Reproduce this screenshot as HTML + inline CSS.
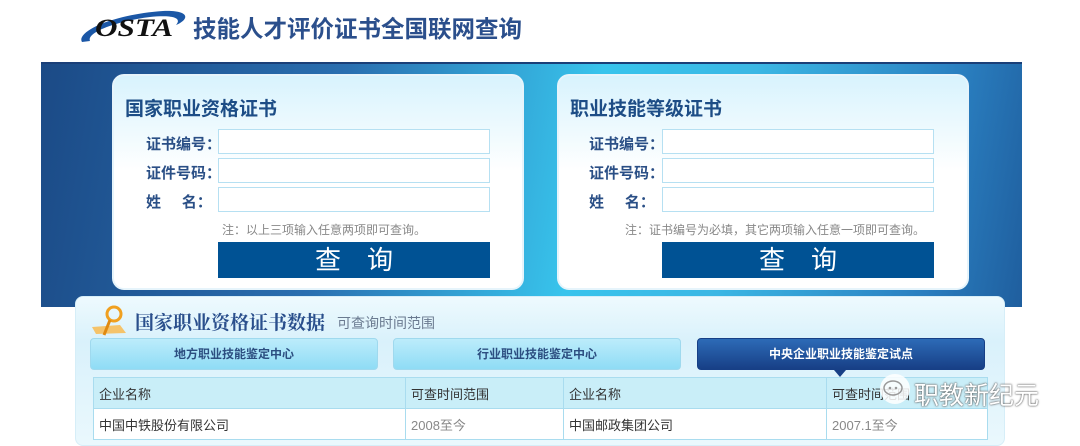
<!DOCTYPE html>
<html><head><meta charset="utf-8"><style>
*{margin:0;padding:0;box-sizing:border-box}
body{width:1080px;height:438px;overflow:hidden;background:#fff;font-family:"Liberation Sans","Noto Sans CJK SC",sans-serif;position:relative}
.abs{position:absolute}
.band{left:41px;top:62px;width:981px;height:245px;background:linear-gradient(100deg,#1b4a86 0%,#2a6fb0 30%,#38c4ec 55%,#3bb7e4 70%,#2a7fc0 90%,#1f5e9e 100%);border-top:2px solid #1a3f78}
.card{width:412px;height:216px;top:74px;border-radius:12px;background:linear-gradient(#d8f3fd 0%,#ffffff 45%,#fff 100%);border:2px solid #e6f4fb}
.card h2{position:absolute;left:11px;top:18px;font-size:19px;color:#1d4d86;font-weight:bold}
.lbl{position:absolute;font-size:15px;font-weight:bold;color:#2a4f86;width:75px}
.inp{position:absolute;width:272px;height:25px;background:#fff;border:1px solid #b6e0f2}
.note{position:absolute;font-size:12px;color:#888}
.btn{position:absolute;width:272px;height:36px;background:#005294;color:#fff;font-size:26px;text-align:center;line-height:36px;letter-spacing:26px;padding-left:26px}
.panel{left:75px;top:296px;width:930px;height:150px;border-radius:8px;background:linear-gradient(#eefafe,#d9f1fb 30%,#eaf8fd);border:1px solid #d6eef8}
.tab{top:338px;width:288px;height:32px;border-radius:4px;background:linear-gradient(#bcecfb,#8fdcf5);border:1px solid #9fd9ee;font-size:12px;font-weight:bold;color:#2c4e80;text-align:center;line-height:31px}
.tab.on{background:linear-gradient(#2d6bb7,#173f86);color:#fff;border-color:#173f86}
table{position:absolute;left:93px;top:377px;border-collapse:collapse;font-size:13px;color:#333}
td{border:1px solid #a9dcef;height:31px;padding-left:5px}
tr.h td{background:#c9eef8}
tr.r td{background:#fff}
</style></head><body>
<svg class="abs" style="left:78px;top:6px" width="112" height="40" viewBox="0 0 112 40">
<path d="M4 36 C -2 27, 30 9, 85 5 C 112 4, 112 13, 98 19 C 105 11, 92 9, 72 11 C 40 15, 8 26, 12 35 Z" fill="#1b57a6"/>
<text x="17" y="30" font-family="Liberation Serif" font-style="italic" font-weight="bold" font-size="25" fill="#111" textLength="78" lengthAdjust="spacingAndGlyphs">OSTA</text>
</svg>
<div class="abs" style="left:193px;top:10px;font-size:23.5px;font-weight:bold;color:#2b4f8c">技能人才评价证书全国联网查询</div>
<div class="abs band"></div>
<div class="abs card" style="left:112px">
<h2>国家职业资格证书</h2>
<div class="lbl" style="left:32px;top:57px">证书编号：</div>
<div class="lbl" style="left:32px;top:86px">证件号码：</div>
<div class="lbl" style="left:32px;top:115px">姓&nbsp;&nbsp;&nbsp;&nbsp;&nbsp;名：</div>
<div class="inp" style="left:104px;top:53px"></div>
<div class="inp" style="left:104px;top:82px"></div>
<div class="inp" style="left:104px;top:111px"></div>
<div class="note" style="left:108px;top:145px">注：以上三项输入任意两项即可查询。</div>
<div class="btn" style="left:104px;top:166px">查询</div>
</div>
<div class="abs card" style="left:557px">
<h2>职业技能等级证书</h2>
<div class="lbl" style="left:30px;top:57px">证书编号：</div>
<div class="lbl" style="left:30px;top:86px">证件号码：</div>
<div class="lbl" style="left:30px;top:115px">姓&nbsp;&nbsp;&nbsp;&nbsp;&nbsp;名：</div>
<div class="inp" style="left:103px;top:53px"></div>
<div class="inp" style="left:103px;top:82px"></div>
<div class="inp" style="left:103px;top:111px"></div>
<div class="note" style="left:66px;top:145px">注：证书编号为必填，其它两项输入任意一项即可查询。</div>
<div class="btn" style="left:103px;top:166px">查询</div>
</div>
<div class="abs panel"></div>
<svg class="abs" style="left:90px;top:303px" width="40" height="34"><circle cx="24" cy="11" r="7" fill="none" stroke="#f0a020" stroke-width="3"/><path d="M2 24 L30 22 L36 30 L6 31 Z" fill="#f5c36a"/><path d="M20 17 L14 32" stroke="#e08a10" stroke-width="3"/></svg>
<div class="abs" style="left:135px;top:308px;font-size:19px;font-weight:bold;color:#2a4f8c;font-family:'Liberation Serif','Noto Serif CJK SC',serif">国家职业资格证书数据</div>
<div class="abs" style="left:337px;top:313px;font-size:14px;color:#6a7a90">可查询时间范围</div>
<div class="abs tab" style="left:90px">地方职业技能鉴定中心</div>
<div class="abs tab" style="left:393px">行业职业技能鉴定中心</div>
<div class="abs tab on" style="left:697px">中央企业职业技能鉴定试点</div>
<div class="abs" style="left:834px;top:370px;width:0;height:0;border-left:6px solid transparent;border-right:6px solid transparent;border-top:7px solid #173f86"></div>
<table>
<tr class="h"><td style="width:312px">企业名称</td><td style="width:158px">可查时间范围</td><td style="width:263px">企业名称</td><td style="width:161px">可查时间范围</td></tr>
<tr class="r"><td>中国中铁股份有限公司</td><td style="color:#888">2008至今</td><td>中国邮政集团公司</td><td style="color:#888">2007.1至今</td></tr>
</table>
<svg class="abs" style="left:878px;top:372px" width="34" height="34"><circle cx="17" cy="17" r="15" fill="#fff" opacity=".85"/><ellipse cx="15" cy="16" rx="9" ry="7" fill="none" stroke="#999" stroke-width="1.5"/><circle cx="12" cy="16" r="1.3" fill="#999"/><circle cx="18" cy="16" r="1.3" fill="#999"/></svg>
<div class="abs" style="left:914px;top:376px;font-size:25px;color:#fff;text-shadow:0 0 2px #555,0 0 1px #555">职教新纪元</div>
</body></html>
